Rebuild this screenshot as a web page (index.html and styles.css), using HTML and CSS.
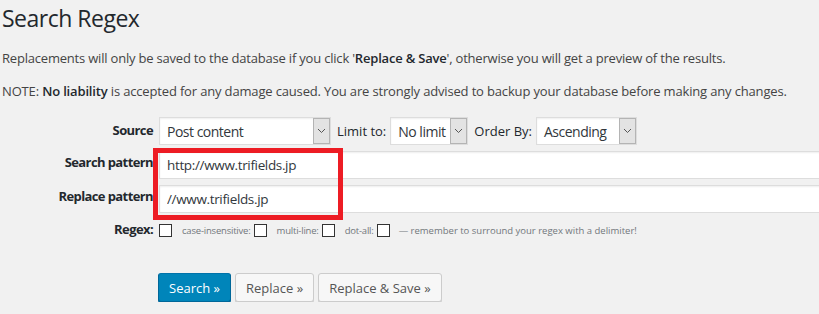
FILE: index.html
```html
<!DOCTYPE html>
<html lang="en">
<head>
  <meta charset="UTF-8">
  <title>Search Regex</title>
  <link rel="stylesheet" href="styles.css">
</head>
<body>
  <div class="wrap">
    <h2>Search Regex</h2>
    <p>Replacements will only be saved to the database if you click '<b>Replace &amp; Save</b>', otherwise you will get a preview of the results.</p>
    <p class="note-line">NOTE: <b>No liability</b> is accepted for any damage caused. You are strongly advised to backup your database before making any changes.</p>

    <form class="search-form">
      <label class="row-label label-source">Source</label>
      <div class="field field-inline">
        <div class="select select-source"><span class="value">Post content</span><span class="arrow"><svg width="9" height="6" viewBox="0 0 9 6"><path d="M1 1l3.5 3.5L8 1" fill="none" stroke="#555" stroke-width="1"/></svg></span></div>
        <span class="inline-label">Limit to:</span>
        <div class="select select-limit"><span class="value">No limit</span><span class="arrow"><svg width="9" height="6" viewBox="0 0 9 6"><path d="M1 1l3.5 3.5L8 1" fill="none" stroke="#555" stroke-width="1"/></svg></span></div>
        <span class="inline-label">Order By:</span>
        <div class="select select-order"><span class="value">Ascending</span><span class="arrow"><svg width="9" height="6" viewBox="0 0 9 6"><path d="M1 1l3.5 3.5L8 1" fill="none" stroke="#555" stroke-width="1"/></svg></span></div>
      </div>

      <label class="row-label label-pattern">Search pattern</label>
      <input class="text-input row-search" type="text" value="http://www.trifields.jp">

      <label class="row-label label-pattern">Replace pattern</label>
      <input class="text-input row-replace" type="text" value="//www.trifields.jp">

      <div class="highlight"></div>

      <label class="row-label label-regex">Regex:</label>
      <div class="field field-regex">
        <span class="check"></span>
        <span class="small">case-insensitive:</span><span class="check"></span>
        <span class="small">multi-line:</span><span class="check"></span>
        <span class="small">dot-all:</span><span class="check"></span>
        <span class="small note">&mdash; remember to surround your regex with a delimiter!</span>
      </div>
    </form>

    <div class="buttons">
      <button class="button button-primary" type="button">Search &raquo;</button>
      <button class="button" type="button">Replace &raquo;</button>
      <button class="button" type="button">Replace &amp; Save &raquo;</button>
    </div>
  </div>
</body>
</html>
```

FILE: styles.css
```css
body {
  margin: 0;
  background-color: #f1f1f1;
  color: #444;
  font-family: "Open Sans", "Noto Sans", sans-serif;
  font-size: 13px;
  overflow: hidden;
}

.wrap {
  padding: 4px 0 0 2px;
}

h2 {
  margin: 0 0 16px;
  font-size: 23px;
  font-weight: 400;
  line-height: 29px;
  color: #23282d;
  letter-spacing: -0.5px;
}

p {
  margin: 13px 0;
  line-height: 19.5px;
  letter-spacing: -0.2px;
}

p.note-line {
  letter-spacing: -0.16px;
}

p b {
  color: #23282d;
  font-weight: 600;
}

/* form grid */
.search-form {
  display: grid;
  grid-template-columns: 151px 1fr;
  grid-template-rows: 28px 28px 28px 20px;
  column-gap: 6px;
  row-gap: 6px;
  margin-top: 16px;
  margin-right: -40px;
}

.row-label {
  grid-column: 1;
  text-align: right;
  font-weight: 700;
  color: #23282d;
  letter-spacing: -0.6px;
  white-space: nowrap;
}

.label-source {
  line-height: 27px;
}

.label-pattern {
  padding-top: 1px;
  line-height: 20px;
}

.label-regex {
  line-height: 20px;
}

.field {
  grid-column: 2;
  display: flex;
  align-items: center;
}

.inline-label {
  color: #23282d;
  margin: 0 4px 0 6px;
}

.select {
  display: flex;
  align-items: stretch;
  height: 28px;
  box-sizing: border-box;
  border: 1px solid #ddd;
  background-color: #fff;
  box-shadow: inset 0 1px 2px rgba(0, 0, 0, 0.07);
  color: #32373c;
  font-size: 14px;
}

.select .value {
  flex: 1;
  padding-left: 7px;
  line-height: 27px;
  letter-spacing: -0.5px;
  white-space: nowrap;
  overflow: hidden;
}

.select .arrow {
  width: 15px;
  border: 1px solid #b4b4b4;
  background-color: #e3e3e3;
  display: flex;
  align-items: center;
  justify-content: center;
}

.select-source {
  width: 172px;
}

.select-limit {
  width: 78px;
}

.select-order {
  width: 101px;
}

.text-input {
  grid-column: 2;
  height: 28px;
  box-sizing: border-box;
  margin: 0;
  padding: 0 7px;
  border: 1px solid #ddd;
  background-color: #fff;
  box-shadow: inset 0 1px 2px rgba(0, 0, 0, 0.07);
  color: #32373c;
  font-family: inherit;
  font-size: 13.5px;
  letter-spacing: -0.35px;
  outline: none;
}

.row-search {
  grid-row: 2;
}

.row-replace {
  grid-row: 3;
}

.highlight {
  grid-column: 2;
  grid-row: 2 / 4;
  justify-self: start;
  width: 190px;
  margin: -3px 0 -7px -6px;
  box-sizing: border-box;
  border: 5px solid #ed1c24;
  pointer-events: none;
}

.field-regex {
  align-items: flex-start;
  padding-top: 5px;
}

.check {
  width: 13px;
  height: 13px;
  box-sizing: border-box;
  border: 1px solid #333;
  background-color: #fff;
  flex: none;
}

.small {
  font-size: 9.5px;
  color: #72777c;
  margin: 1px 3px 0 10px;
  letter-spacing: -0.2px;
  line-height: 12px;
}

.note {
  margin-left: 9px;
  letter-spacing: 0;
}

/* buttons */
.buttons {
  display: flex;
  gap: 4px;
  margin-top: 34px;
  padding-left: 156px;
}

.button {
  height: 29px;
  box-sizing: border-box;
  padding: 0 10px;
  border: 1px solid #ccc;
  border-radius: 3px;
  background-color: #f7f7f7;
  box-shadow: 0 1px 0 #ccc;
  color: #555;
  font-family: inherit;
  font-size: 13px;
  line-height: 26px;
}

.button-primary {
  background-color: #0085ba;
  border-color: #0073aa #006799 #006799;
  box-shadow: 0 1px 0 #006799;
  color: #fff;
}
```
